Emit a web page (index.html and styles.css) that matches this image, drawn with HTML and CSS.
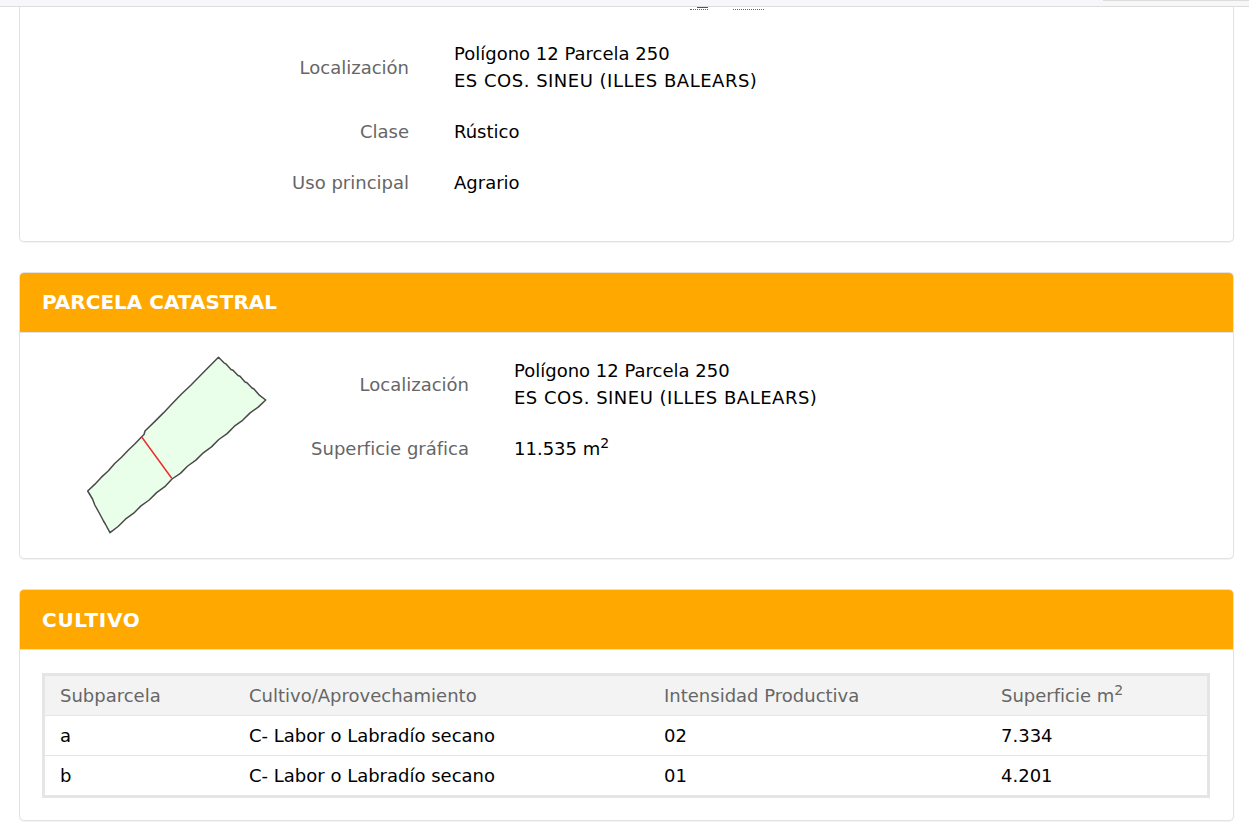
FILE: index.html
```html
<!DOCTYPE html>
<html lang="es">
<head>
<meta charset="utf-8">
<title>Parcela catastral</title>
<link rel="stylesheet" href="styles.css">
</head>
<body>
<div class="topbar">
  <span class="topbar-tab"></span>
  <span class="clip-mark clip-a"></span>
  <span class="clip-mark clip-b"></span>
  <span class="clip-bar"></span>
</div>
<main class="page">
  <section class="card card-first">
    <dl class="facts">
      <dt>Localización</dt>
      <dd>Polígono 12 Parcela 250<br><span class="caps">ES COS. SINEU (ILLES BALEARS)</span></dd>
      <dt>Clase</dt>
      <dd>Rústico</dd>
      <dt>Uso principal</dt>
      <dd>Agrario</dd>
    </dl>
  </section>

  <section class="card">
    <h2 class="card-head">PARCELA CATASTRAL</h2>
    <div class="parcel">
      <svg class="parcel-map" width="240" height="196" viewBox="60 345 240 196" aria-hidden="true">
        <path class="plot" d="M218.500 357.300L224 362.800L225.800 363.800L231 369.500L233 370.300L238 375.500L240 376.300L245 382L247 382.800L252 388L254 389L259 394.800L265.700 400L258.200 407.100L250.100 412.900L242.600 420.300L234.400 426.200L227.100 433.600L218.800 439.500L211.500 446.900L203.300 452.800L195.900 460.100L187.700 466L180.400 473.400L172 479L164.800 486.700L156.600 492.600L149.200 500L141 505.900L133.700 513.200L125.400 519.200L118.100 526.500L110 532.700L105.300 524L103.500 521L99 512.500L94.800 505L92.500 499L87.700 491L94.700 484.400L101.200 477.400L108.200 471L114.700 463.500L121.500 457.300L128.200 450.300L135 443.700L141.700 436.700L144 434.500L145 431L154.400 421.900L163.400 412.900L172.800 403L181.500 394L190.800 385.300L200.100 375.800L209 366.800Z"/>
        <path class="split" d="M141.700 437L171.700 478.300"/>
      </svg>
      <dl class="facts facts-parcel">
        <dt>Localización</dt>
        <dd>Polígono 12 Parcela 250<br><span class="caps">ES COS. SINEU (ILLES BALEARS)</span></dd>
        <dt>Superficie gráfica</dt>
        <dd>11.535 m<sup>2</sup></dd>
      </dl>
    </div>
  </section>

  <section class="card">
    <h2 class="card-head card-head-wide">CULTIVO</h2>
    <div class="crop-body">
      <table class="crop-table">
        <colgroup>
          <col class="col-a"><col class="col-b"><col class="col-c"><col>
        </colgroup>
        <thead>
          <tr><th>Subparcela</th><th>Cultivo/Aprovechamiento</th><th>Intensidad Productiva</th><th>Superficie m<sup>2</sup></th></tr>
        </thead>
        <tbody>
          <tr><td>a</td><td>C- Labor o Labradío secano</td><td>02</td><td>7.334</td></tr>
          <tr><td>b</td><td>C- Labor o Labradío secano</td><td>01</td><td>4.201</td></tr>
        </tbody>
      </table>
    </div>
  </section>
</main>
</body>
</html>
```
FILE: styles.css
```css
* { box-sizing: border-box; }
html, body { margin: 0; padding: 0; }
body {
  background: #fff;
  color: #000;
  font-family: "DejaVu Sans", Verdana, sans-serif;
  font-size: 18px;
  line-height: 27px;
  height: 837px;
  overflow: hidden;
}
.caps { letter-spacing: .5px; }
.topbar {
  position: relative;
  height: 7px;
  background: #f7f7f9;
  border-bottom: 1px solid #dcdcdc;
}
.topbar-tab {
  position: absolute;
  top: 0;
  left: 1103px;
  right: 0;
  height: 1px;
  background: #dddddd;
}
.clip-mark {
  position: absolute;
  top: 9px;
  height: 1px;
  border-top: 1px dotted #666;
}
.clip-a { left: 690px; width: 18px; }
.clip-b { left: 733px; width: 31px; }
.clip-bar {
  position: absolute;
  top: 7px;
  left: 697px;
  width: 11px;
  height: 1px;
  background: #555;
}
.page {
  padding: 0 15px 0 19px;
  display: flex;
  flex-direction: column;
  gap: 30px;
}
.card {
  border: 1px solid #e2e2e2;
  border-radius: 5px;
  background: #fff;
  box-shadow: 0 1px 1px rgba(0, 0, 0, .05);
  overflow: hidden;
}
.card-first {
  border-top: 0;
  border-radius: 0 0 5px 5px;
  height: 235px;
  padding-top: 33px;
}
.card-head {
  margin: 0;
  height: 60px;
  padding: 0 22px;
  background: #ffa800;
  border-bottom: 1px solid #e2e2e2;
  color: #fff;
  font-size: 20px;
  line-height: 59px;
  font-weight: 700;
}
.card-head-wide {
  letter-spacing: .7px;
  line-height: 61px;
}
.facts {
  margin: 0;
  display: grid;
  grid-template-columns: 389px 1fr;
  column-gap: 45px;
  row-gap: 24px;
}
.facts dt {
  align-self: center;
  text-align: right;
  color: #666;
}
.facts dd { margin: 0; }
.facts sup, .crop-table sup {
  font-size: 14px;
  line-height: 0;
}
.parcel {
  display: flex;
  height: 225px;
}
.parcel-map { flex: none; margin: 12px 0 0 40px; }
.facts-parcel {
  margin: 24px 0 0 -40px;
  grid-template-columns: 209px 1fr;
  align-content: start;
}
.plot {
  fill: #eaffea;
  stroke: #4a4a4a;
  stroke-width: 1.500;
  stroke-linejoin: round;
}
.split {
  fill: none;
  stroke: #f02b2b;
  stroke-width: 1.500;
}
.crop-body { padding: 23px 23px 22px 22px; }
.crop-table {
  width: 100%;
  border-collapse: separate;
  border-spacing: 0;
  border: 3px solid #e5e5e5;
  table-layout: fixed;
}
.col-a { width: 189px; }
.col-b { width: 415px; }
.col-c { width: 337px; }
.crop-table th, .crop-table td {
  padding: 6px 15px;
  height: 40px;
  text-align: left;
  font-weight: 400;
  border-bottom: 1px solid #e5e5e5;
}
.crop-table th {
  background: #f3f3f3;
  color: #666;
}
.crop-table tbody tr:last-child td {
  border-bottom: 0;
  height: 39px;
}
```
